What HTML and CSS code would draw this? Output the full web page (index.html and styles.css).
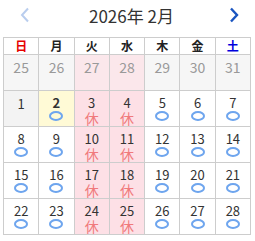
FILE: index.html
```html
<!DOCTYPE html>
<html>
<head>
  <title>calendar</title>
  <link rel="stylesheet" href="styles.css">
</head>
<body>
  <div class="calendar">
    <div class="cal-head">
      <a class="nav prev"><svg width="10" height="16" viewBox="0 0 10 16"><path d="M8 1.5 L2 8 L8 14.5" fill="none" stroke="currentColor" stroke-width="2"/></svg></a>
      <span class="month">2026年 2月</span>
      <a class="nav next"><svg width="10" height="16" viewBox="0 0 10 16"><path d="M2 1.5 L8 8 L2 14.5" fill="none" stroke="currentColor" stroke-width="2.4"/></svg></a>
    </div>
    <table class="grid">
      <thead>
        <tr>
          <th class="sun">日</th><th>月</th><th>火</th><th>水</th><th>木</th><th>金</th><th class="sat">土</th>
        </tr>
      </thead>
      <tbody id="days"></tbody>
    </table>
  </div>

  <script>
    // 2026/02 starts on Sunday; previous month fills the first row
    const prevDays = [25, 26, 27, 28, 29, 30, 31];
    const closedCols = [2, 3]; // Tue, Wed closed
    const today = 2;

    const body = document.getElementById("days");

    let row = document.createElement("tr");
    prevDays.forEach(function(d, i) {
      const td = document.createElement("td");
      td.className = "other";
      if (closedCols.includes(i)) td.className += " closed-other";
      td.innerHTML = '<span class="num">' + d + '</span>';
      row.appendChild(td);
    });
    body.appendChild(row);

    for (let w = 0; w < 4; w++) {
      row = document.createElement("tr");
      for (let i = 0; i < 7; i++) {
        const d = w * 7 + i + 1;
        const td = document.createElement("td");
        let mark = '<span class="ok"></span>';
        if (closedCols.includes(i)) {
          td.className = "closed";
          mark = '<span class="off">休</span>';
        }
        if (d === 1) {
          td.className = "past";
          mark = '';
        }
        if (d === today) td.className = "today";
        td.innerHTML = '<span class="num">' + d + '</span>' + mark;
        row.appendChild(td);
      }
      body.appendChild(row);
    }
  </script>
</body>
</html>
```

FILE: styles.css
```css
html, body {
  margin: 0;
  padding: 0;
  background: #fff;
  font-family: "Noto Sans CJK JP", "Noto Sans", sans-serif;
  color: #333;
}

.calendar {
  width: 248px;
  padding: 0 0 0 3px;
}

.cal-head {
  height: 37px;
  display: flex;
  align-items: center;
  justify-content: space-between;
  padding: 0 14px 0 14px;
  box-sizing: border-box;
}

.nav {
  display: flex;
  width: 10px;
  height: 16px;
  margin-top: -7px;
}

.prev {
  color: #b9cdee;
  margin-left: 3px;
}

.next {
  color: #1a55c0;
  margin-right: -2px;
}

.month {
  font-size: 17px;
  margin-top: -7px;
  margin-left: 4px;
  color: #333;
}

.grid {
  width: 248px;
  border-collapse: collapse;
  table-layout: fixed;
}

.grid th,
.grid td {
  border: 1px solid #cdcdcd;
  text-align: center;
  padding: 0;
}

.grid th {
  height: 16px;
  font-size: 12px;
  font-weight: bold;
  line-height: 14px;
  color: #222;
}

.grid th.sun {
  color: #e60000;
}

.grid th.sat {
  color: #0000dd;
}

.grid td {
  height: 35px;
  vertical-align: top;
  background: #fff;
}

.num {
  display: block;
  font-size: 13px;
  line-height: 13px;
  margin-top: 5px;
}

.other {
  background: #f6f6f6 !important;
}

.other .num {
  color: #999;
  font-size: 14px;
  margin-top: 6px;
}

.closed-other {
  background: #fbe7eb !important;
}

.past {
  background: #f3f3f3 !important;
}

.past .num {
  margin-top: 6px;
}

.today {
  background: #fffad6 !important;
}

.today .num {
  font-weight: bold;
}

.closed {
  background: #fde0e6 !important;
}

.ok {
  display: block;
  width: 10px;
  height: 6px;
  margin: 2px auto 0;
  border: 2px solid #6ea5ee;
  border-radius: 50%;
}

.off {
  display: block;
  font-size: 14px;
  line-height: 14px;
  margin-top: 2px;
  color: #f07a7c;
}
```
